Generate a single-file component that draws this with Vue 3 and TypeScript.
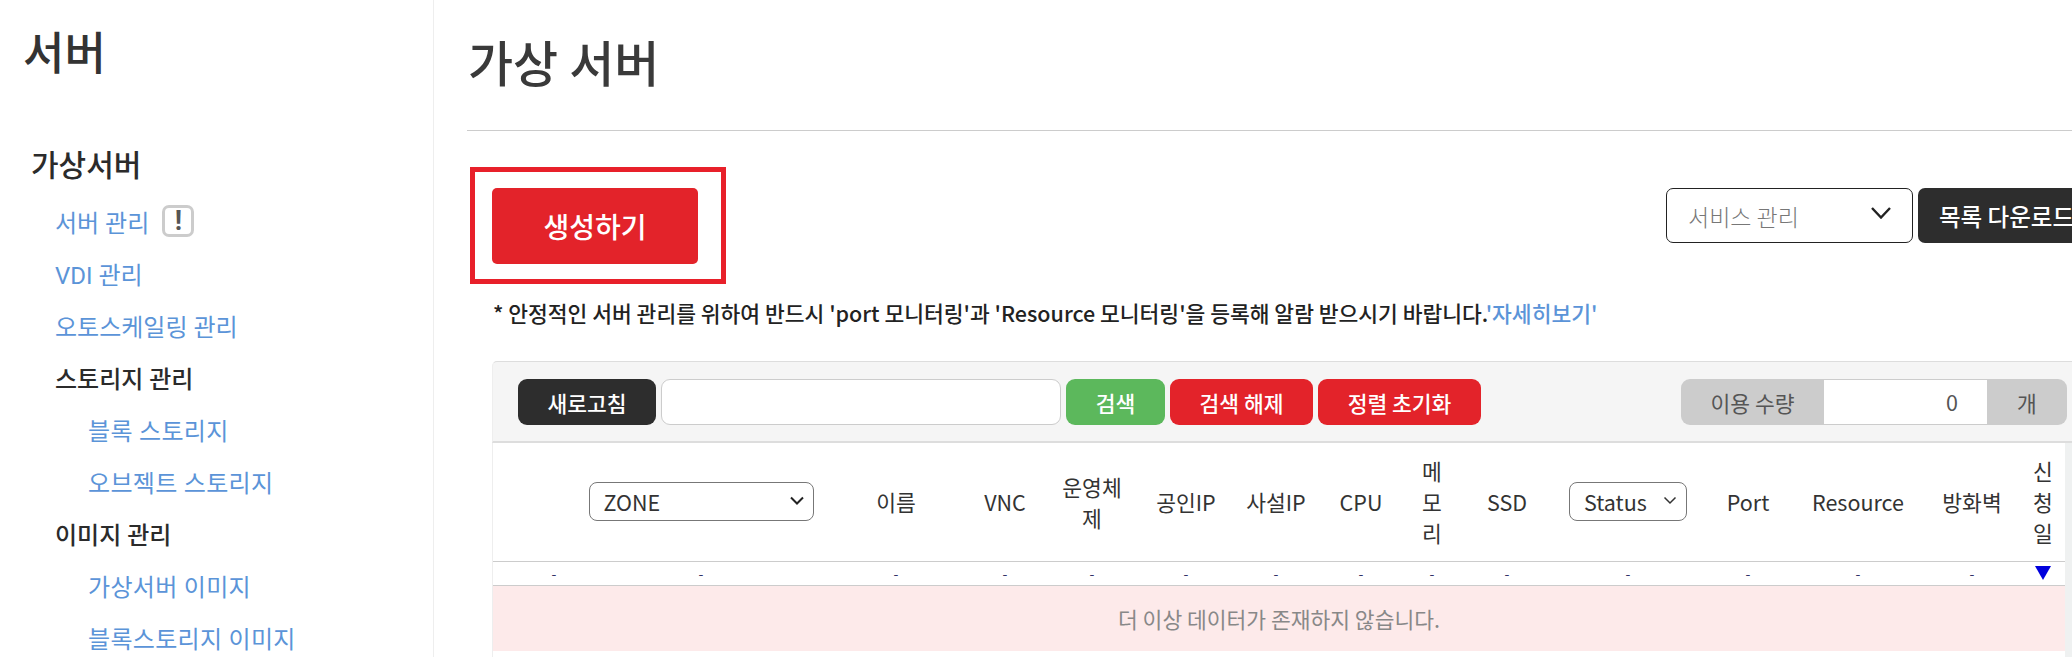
<script setup lang="ts">
interface NavItem { label: string; kind: 'link' | 'head' | 'sub'; badge?: boolean }

const nav: NavItem[] = [
  { label: '서버 관리', kind: 'link', badge: true },
  { label: 'VDI 관리', kind: 'link' },
  { label: '오토스케일링 관리', kind: 'link' },
  { label: '스토리지 관리', kind: 'head' },
  { label: '블록 스토리지', kind: 'sub' },
  { label: '오브젝트 스토리지', kind: 'sub' },
  { label: '이미지 관리', kind: 'head' },
  { label: '가상서버 이미지', kind: 'sub' },
  { label: '블록스토리지 이미지', kind: 'sub' },
]

const widths = [40, 42, 252, 138, 80, 94, 94, 86, 84, 58, 92, 150, 90, 130, 98, 44]
const afterZone = ['이름', 'VNC', '운영체제', '공인IP', '사설IP', 'CPU', '메모리', 'SSD']
const afterStatus = ['Port', 'Resource', '방화벽', '신청일']
const dashes = Array.from({ length: 14 }, (_, i) => i)
</script>

<template>
  <div class="page">
    <aside class="side">
      <h2 class="side-title">서버</h2>
      <h3 class="side-group">가상서버</h3>
      <ul class="nav">
        <li v-for="item in nav" :key="item.label" :class="['nav-item', item.kind]">
          <span>{{ item.label }}</span>
          <span v-if="item.badge" class="badge">!</span>
        </li>
      </ul>
    </aside>

    <main class="main">
      <h1 class="title">가상 서버</h1>
      <div class="actions">
        <div class="create-mark">
          <button class="create">생성하기</button>
        </div>
        <div class="actions-right">
          <div class="service">
            <span>서비스 관리</span>
            <svg width="20" height="12" viewBox="0 0 20 12"><path d="M1 1l9 9.5L19 1" fill="none" stroke="#222" stroke-width="2.4" /></svg>
          </div>
          <button class="download">목록 다운로드</button>
        </div>
      </div>
      <p class="note">* 안정적인 서버 관리를 위하여 반드시 'port 모니터링'과 'Resource 모니터링'을 등록해 알람 받으시기 바랍니다.<a class="more">'자세히보기'</a></p>

      <section class="panel">
        <div class="toolbar">
          <button class="btn dark">새로고침</button>
          <input class="search" type="text" />
          <button class="btn green">검색</button>
          <button class="btn red wide1">검색 해제</button>
          <button class="btn red wide2">정렬 초기화</button>
          <div class="qty">
            <span class="qty-label">이용 수량</span>
            <span class="qty-value">0</span>
            <span class="qty-unit">개</span>
          </div>
        </div>
        <div class="grid-wrap">
          <table class="grid">
            <colgroup>
              <col v-for="(w, i) in widths" :key="i" :style="{ width: w + 'px' }" />
            </colgroup>
            <thead>
              <tr class="heads">
                <th></th>
                <th></th>
                <th>
                  <div class="pick zone">
                    <span>ZONE</span>
                    <svg width="14" height="9" viewBox="0 0 14 9"><path d="M1 1.5l6 6 6-6" fill="none" stroke="#222" stroke-width="2" /></svg>
                  </div>
                </th>
                <th v-for="h in afterZone" :key="h">{{ h }}</th>
                <th>
                  <div class="pick status">
                    <span>Status</span>
                    <svg width="14" height="9" viewBox="0 0 14 9"><path d="M1.5 1.5l5.5 5.5 5.5-5.5" fill="none" stroke="#333" stroke-width="1.5" /></svg>
                  </div>
                </th>
                <th v-for="h in afterStatus" :key="h">{{ h }}</th>
              </tr>
              <tr class="sorts">
                <td></td>
                <td v-for="d in dashes" :key="d">-</td>
                <td>
                  <svg class="sort" width="16" height="14" viewBox="0 0 16 14"><path d="M0 0h16L8 14z" fill="#0000dd" /></svg>
                </td>
              </tr>
            </thead>
            <tbody>
              <tr class="empty"><td colspan="16">더 이상 데이터가 존재하지 않습니다.</td></tr>
            </tbody>
          </table>
        </div>
      </section>
    </main>
  </div>
</template>

<style scoped>
.page {
  display: flex;
  width: 2072px;
  height: 657px;
  overflow: hidden;
  background: #fff;
  color: #333;
  font-family: "Noto Sans CJK KR", "Noto Sans", sans-serif;
}
.side {
  flex: 0 0 434px;
  box-sizing: border-box;
  border-right: 1px solid #eee;
  padding: 20px 0 0 23px;
  overflow: hidden;
}
.side-title {
  margin: 0;
  font-size: 45px;
  line-height: 62px;
  font-weight: 500;
}
.side-group {
  margin: 59px 0 0 8px;
  font-size: 30px;
  line-height: 44px;
  font-weight: 500;
  color: #2b2b2b;
}
.nav {
  list-style: none;
  margin: 10px 0 0;
  padding: 0;
}
.nav-item {
  display: flex;
  align-items: center;
  gap: 13px;
  height: 52px;
  font-size: 24px;
  white-space: nowrap;
  color: #5b94d8;
  font-family: Roboto, "Noto Sans CJK KR", sans-serif;
}
.nav-item.link { padding-left: 32px; }
.nav-item.head { padding-left: 32px; color: #2b2b2b; font-weight: 500; }
.nav-item.sub { padding-left: 65px; }
.nav-item.sub span { letter-spacing: 0.3px; }
.badge {
  box-sizing: border-box;
  width: 32px;
  height: 32px;
  display: flex;
  align-items: center;
  justify-content: center;
  border: 3px solid #ccc;
  border-radius: 7px;
  font-size: 27px;
  font-weight: 700;
  color: #555;
}
.main {
  flex: 0 0 auto;
  width: 1638px;
  box-sizing: border-box;
  padding-left: 33px;
}
.title {
  margin: 0;
  height: 131px;
  box-sizing: border-box;
  padding: 26px 0 0 1px;
  border-bottom: 1px solid #ccc;
  font-size: 49px;
  line-height: 70px;
  font-weight: 500;
  color: #3a3a3a;
}
.actions {
  display: flex;
  justify-content: space-between;
  width: 1658px;
  padding: 36px 0 0 3px;
}
.create-mark {
  box-sizing: border-box;
  width: 256px;
  height: 117px;
  border: 5px solid #e8202a;
  padding: 16px 0 0 17px;
}
.create {
  width: 206px;
  height: 76px;
  border: 0;
  border-radius: 5px;
  background: #e3232a;
  color: #fff;
  font: 500 28px "Noto Sans CJK KR", sans-serif;
}
.actions-right {
  display: flex;
  gap: 5px;
  padding-top: 21px;
  height: 55px;
}
.service {
  box-sizing: border-box;
  width: 247px;
  height: 55px;
  padding: 0 21px 0 21px;
  display: flex;
  align-items: center;
  justify-content: space-between;
  border: 1px solid #222;
  border-radius: 7px;
  font-size: 23px;
  font-weight: 300;
  color: #777;
}
.service svg { margin-top: -5px; }
.download {
  flex: none;
  width: 210px;
  height: 55px;
  border: 0;
  border-radius: 7px;
  background: #2d2d2d;
  color: #fff;
  text-align: left;
  padding: 0 0 0 21px;
  font: 500 23.5px "Noto Sans CJK KR", sans-serif;
}
.note {
  margin: 13px 0 0 26px;
  font-size: 21.5px;
  line-height: 31px;
  font-weight: 500;
  color: #222;
  white-space: nowrap;
}
.more { color: #5b94d8; }
.panel {
  width: 1605px;
  margin: 33px 0 0 25px;
}
.toolbar {
  box-sizing: border-box;
  height: 82px;
  padding: 17px 30px 0 25px;
  display: flex;
  gap: 5px;
  background: #f5f5f5;
  border-top: 1px solid #ddd;
  border-left: 1px solid #eee;
  border-bottom: 2px solid #ddd;
  border-top-left-radius: 5px;
}
.btn {
  height: 46px;
  border: 0;
  border-radius: 9px;
  color: #fff;
  font: 500 21.5px "Noto Sans CJK KR", sans-serif;
  padding: 0;
}
.dark { width: 138px; background: #2d2d2d; }
.green { width: 99px; background: #5cb85c; }
.red { background: #e3232a; }
.wide1 { width: 143px; }
.wide2 { width: 163px; }
.search {
  box-sizing: border-box;
  width: 400px;
  height: 46px;
  border: 1px solid #ccc;
  border-radius: 9px;
  background: #fff;
  outline: none;
}
.qty {
  margin-left: auto;
  display: flex;
  height: 46px;
  width: 386px;
  border-radius: 9px;
  overflow: hidden;
  background: #ccc;
  font-size: 21.5px;
  color: #555;
  align-items: center;
}
.qty-label { width: 143px; text-align: center; }
.qty-value {
  box-sizing: border-box;
  width: 163px;
  height: 44px;
  line-height: 44px;
  background: #fff;
  padding-right: 29px;
  text-align: right;
}
.qty-unit { width: 80px; text-align: center; }
.grid-wrap {
  box-sizing: content-box;
  width: 1572px;
  height: 214px;
  border-left: 1px solid #eee;
  border-right: 7px solid #eff1f1;
}
.grid {
  table-layout: fixed;
  width: 1572px;
  border-collapse: collapse;
  font-size: 21.5px;
  color: #333;
}
.heads th {
  height: 118px;
  box-sizing: border-box;
  padding: 12px 10px;
  font-weight: 400;
  line-height: 31px;
  text-align: center;
  vertical-align: middle;
  border-bottom: 1px solid #ccc;
}
.heads th:has(.pick) { padding: 0; }
.pick {
  height: 39px;
  box-sizing: border-box;
  display: inline-flex;
  align-items: center;
  justify-content: space-between;
  border: 1px solid #777;
  border-radius: 8px;
  background: #fff;
  color: #333;
  font-size: 21.5px;
  padding: 0 9px 0 14px;
  text-align: left;
}
.pick svg { flex: none; margin-top: -2px; }
.zone { width: 225px; }
.status { width: 118px; }
.sorts td {
  height: 23px;
  padding: 0;
  text-align: center;
  vertical-align: middle;
  font-size: 14px;
  line-height: 14px;
  color: #336;
  border-bottom: 1px solid #ccc;
}
.sort { display: block; margin: 0 auto; }
.empty td {
  height: 65px;
  padding: 0;
  text-align: center;
  background: #fdeaea;
  color: #888;
  font-size: 21.5px;
}
</style>
